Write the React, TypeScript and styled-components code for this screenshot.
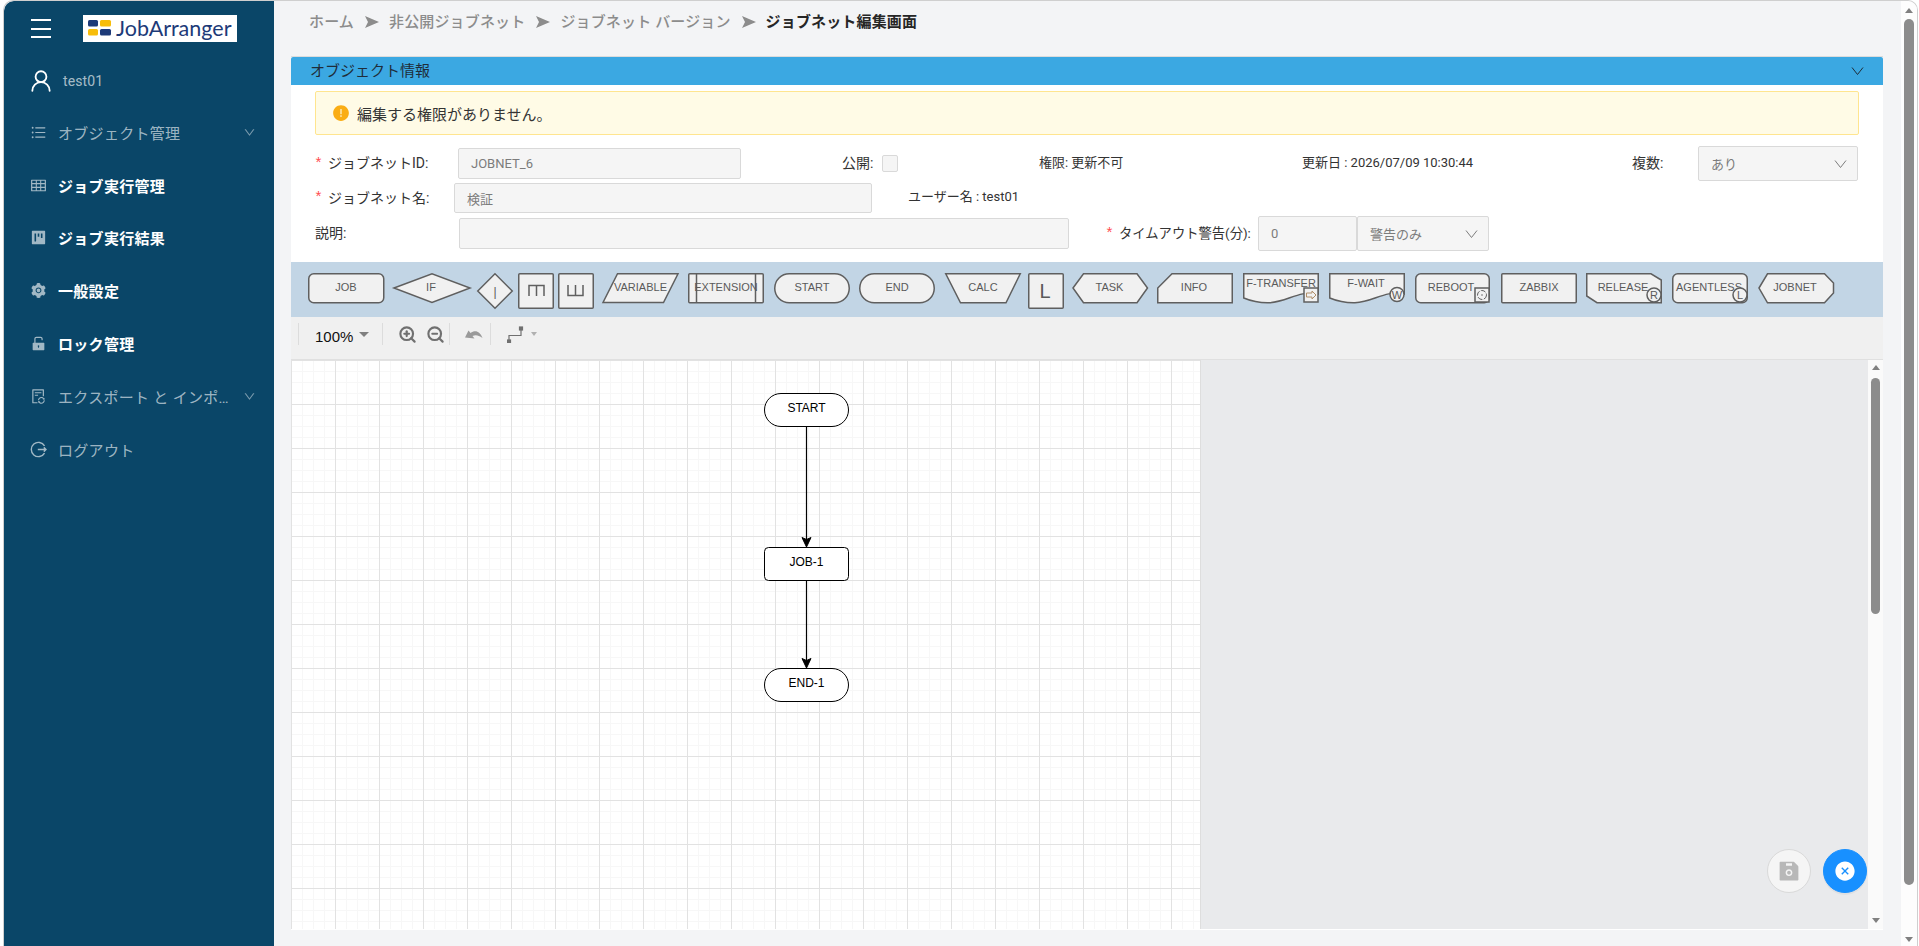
import React from 'react';
import styled, { createGlobalStyle } from 'styled-components';
import { AiOutlineUnorderedList, AiOutlineTable, AiFillProject, AiFillSetting, AiFillUnlock, AiOutlineFileSync, AiOutlineDown, AiFillExclamationCircle, AiFillSave, AiFillCloseCircle } from 'react-icons/ai';
import { UserRound, ZoomIn, ZoomOut } from 'lucide-react';

const FONT = `Roboto, "Noto Sans CJK JP", sans-serif`;

const Global = createGlobalStyle`
  html, body { margin: 0; padding: 0; height: 100%; overflow: hidden; background: #fff; }
  * { box-sizing: border-box; }
  #root { height: 100%; }
`;

const Frame = styled.div`
  margin-left: 3px; width: 1915px; height: 946px; display: flex; overflow: hidden;
  background: #f3f4f6; border: 1px solid #cfcfcf; border-bottom: 0;
  border-radius: 10px 10px 0 0; font-family: ${FONT}; color: #333;
`;

const Sidebar = styled.aside`
  width: 270px; flex: none; background: #0a4668; display: flex; flex-direction: column;
  border-top-left-radius: 10px;
`;
const TopRow = styled.div`
  height: 54px; display: flex; align-items: center; padding-left: 27px;
`;
const Burger = styled.div`
  width: 20px; height: 19px; display: flex; flex-direction: column; justify-content: space-between;
  margin-right: 32px; margin-top: 1px;
  span { display: block; height: 2px; background: #fff; }
`;
const Logo = styled.div`
  width: 154px; height: 27px; background: #fff; display: flex; align-items: center; padding-left: 5px; gap: 4px;
  span { font-family: Lato, sans-serif; font-weight: 400; font-size: 21.5px; color: #1d3a78; white-space: nowrap; }
`;
const UserRow = styled.div`
  height: 51px; display: flex; align-items: center; padding-left: 24px; gap: 9px;
  color: #fff; span { color: rgba(255,255,255,.65); font-size: 14px; letter-spacing: .1px; }
`;
const MenuItem = styled.div<{ $active?: boolean }>`
  height: 52.8px; display: flex; align-items: center; padding-left: 26px;
  color: ${p => (p.$active ? '#fff' : 'rgba(255,255,255,.62)')};
  svg.main { font-size: 17px; color: rgba(255,255,255,.62); flex: none; }
`;
const MenuText = styled.span<{ $active?: boolean }>`
  margin-left: 11px; font-size: 15px; letter-spacing: .3px; font-weight: ${p => (p.$active ? 600 : 400)};
  width: 171px; white-space: nowrap; overflow: hidden; text-overflow: ellipsis; flex: none;
`;
const MenuChevron = styled.span`
  margin-left: 14px; font-size: 13px; color: rgba(255,255,255,.45); display: flex;
`;

const Main = styled.main`
  width: 1627px; flex: none; padding: 0 18px 0 17px; display: flex; flex-direction: column;
`;
const Breadcrumb = styled.nav`
  height: 55px; display: flex; align-items: flex-start; padding: 11px 0 0 18px; font-size: 15px; line-height: 20px; font-weight: 500;
  color: #8c8c8c; white-space: nowrap; letter-spacing: .15px;
`;
const CrumbSep = styled.svg`
  width: 14px; height: 12px; margin: 4px 10px 0 11px; flex: none;
`;
const CrumbLast = styled.span`
  color: #262626; font-weight: 600;
`;
const Card = styled.section`
  background: #fff; border-top: 1px solid #dcdcdc; display: flex; flex-direction: column; height: 874px;
`;
const CardHead = styled.header`
  height: 28px; flex: none; background: #3ba8e2; display: flex; align-items: center; justify-content: space-between;
  padding: 0 19px 3px 19px; font-size: 15px; color: #1f2d3a; border-radius: 2px 2px 0 0;
`;
const Chevron = styled.svg<{ $nudge?: number }>`
  width: 13px; height: 8px; flex: none; margin-top: ${p => p.$nudge ?? 0}px;
  polyline { fill: none; stroke: currentColor; stroke-width: 1; }
`;
const Alert = styled.div`
  margin: 6px 24px 0 24px; height: 44px; flex: none; background: #fffbe6; border: 1px solid #ffe58f; border-radius: 2px;
  display: flex; align-items: center; padding-left: 16px; gap: 7px; font-size: 15px; color: #333;
  svg { color: #faad14; font-size: 18px; }
`;
const Form = styled.div`
  padding: 11px 0 11px 23px; display: flex; flex-direction: column; flex: none;
`;
const FormRow = styled.div<{ $h: number; $mt?: number }>`
  height: ${p => p.$h}px; margin-top: ${p => p.$mt ?? 0}px; display: flex; align-items: center; white-space: nowrap;
`;
const Label = styled.label<{ $w: number; $ml?: number; $size?: number }>`
  width: ${p => p.$w}px; margin-left: ${p => p.$ml ?? 0}px; flex: none; font-size: ${p => p.$size ?? 14}px; color: #333;
  display: flex; align-items: center; padding-bottom: 3px;
`;
const Req = styled.span`
  color: #ff4d4f; margin-right: 6px; font-size: 15px; width: 8px; padding-top: 5px; font-family: "Liberation Mono", monospace; line-height: 14px;
`;
const Info = styled.span<{ $w?: number; $ml?: number }>`
  ${p => (p.$w ? `width: ${p.$w}px;` : '')} margin-left: ${p => p.$ml ?? 0}px; flex: none; font-size: 13px; color: #333; margin-top: -5px;
`;
const Field = styled.div<{ $w: number; $h?: number }>`
  width: ${p => p.$w}px; height: ${p => p.$h ?? 31}px; flex: none; background: #f5f5f5; border: 1px solid #d9d9d9; border-radius: 2px;
  display: flex; align-items: center; justify-content: space-between; padding: 0 10px 0 12px; font-size: 13px; color: #7c7c7c;
`;
const Check = styled.span`
  width: 16px; height: 17px; flex: none; background: #f5f5f5; border: 1px solid #d9d9d9; border-radius: 2px;
`;
const ShapeBar = styled.div`
  height: 55px; flex: none; background: #c2d5e5; display: flex; align-items: flex-start; padding: 11px 0 0 17px;
`;
const ShapeSvg = styled.svg<{ $gap: number }>`
  flex: none; margin-right: ${p => p.$gap}px; overflow: visible; font-family: "Liberation Sans", Arial, sans-serif; font-size: 11px;
  .s { fill: #f1f1f1; stroke: #5f5f5f; stroke-width: 1.5; }
  .n { fill: none; stroke: #5f5f5f; stroke-width: 1.5; }
  text { fill: #5a5a5a; text-anchor: middle; }
`;
const ToolRow = styled.div`
  height: 43px; flex: none; background: #f0f0f0; border-bottom: 1px solid #e0e0e0; display: flex; align-items: flex-start; padding: 6px 0 0 7px;
`;
const ToolGroup = styled.div<{ $w: number; $pad: number; $gap?: number }>`
  width: ${p => p.$w}px; height: 22px; border-left: 1px solid #dcdcdc; padding-left: ${p => p.$pad}px; display: flex; align-items: center; gap: ${p => p.$gap ?? 0}px;
  flex: none; color: #707070;
`;
const ZoomText = styled.span`
  font-family: "Liberation Sans", Arial, sans-serif; font-size: 15px; color: #111; margin-right: 6px; margin-top: 4px;
`;
const Caret = styled.i<{ $small?: boolean }>`
  display: block; width: 0; height: 0; border-left: ${p => (p.$small ? 3.5 : 5)}px solid transparent; border-right: ${p => (p.$small ? 3.5 : 5)}px solid transparent;
  border-top: ${p => (p.$small ? 4 : 5)}px solid ${p => (p.$small ? '#b0b0b0' : '#808080')};
`;
const CanvasRow = styled.div`
  height: 569px; flex: none; display: flex; position: relative;
`;
const GridPane = styled.div`
  width: 909px; flex: none; background-color: #fff;
  background-image:
    linear-gradient(#e2e2e2 1px, transparent 1px), linear-gradient(90deg, #e2e2e2 1px, transparent 1px),
    linear-gradient(#f7f7f7 1px, transparent 1px), linear-gradient(90deg, #f7f7f7 1px, transparent 1px);
  background-size: 44px 44px, 44px 44px, 11px 11px, 11px 11px;
  svg { display: block; width: 100%; height: 100%; font-family: "Liberation Sans", Arial, sans-serif; font-size: 12px; }
  text { text-anchor: middle; fill: #000; }
`;
const SidePane = styled.div`
  flex: 1; background: #e9eaec; border-left: 1px solid #dedede;
`;
const Track = styled.div<{ $w: number; $bg: string }>`
  width: ${p => p.$w}px; flex: none; background: ${p => p.$bg}; display: flex; flex-direction: column; align-items: center;
`;
const ArrowUp = styled.i<{ $mt: number }>`
  display: block; width: 0; height: 0; margin-top: ${p => p.$mt}px; border: 4px solid transparent; border-top: 0; border-bottom: 5px solid #808080; flex: none;
`;
const ArrowDown = styled.i<{ $mb: number }>`
  display: block; width: 0; height: 0; margin-top: auto; margin-bottom: ${p => p.$mb}px; border: 4px solid transparent; border-bottom: 0; border-top: 5px solid #808080; flex: none;
`;
const Thumb = styled.div<{ $w: number; $mt: number; $h: number }>`
  width: ${p => p.$w}px; height: ${p => p.$h}px; margin-top: ${p => p.$mt}px; background: #8c8c8c; border-radius: 5px; flex: none;
`;
const Fab = styled.button<{ $primary?: boolean }>`
  position: absolute; top: 489px; left: ${p => (p.$primary ? 1532 : 1476)}px; width: 44px; height: 44px; border-radius: 50%; padding: 0;
  display: flex; align-items: center; justify-content: center; cursor: pointer;
  background: ${p => (p.$primary ? '#1890ff' : '#f5f5f5')}; border: 1px solid ${p => (p.$primary ? '#1890ff' : '#d9d9d9')};
  color: ${p => (p.$primary ? '#fff' : '#b8b8b8')}; font-size: ${p => (p.$primary ? 22 : 24)}px;
  ${p => (p.$primary ? 'box-shadow: 0 2px 0 rgba(0,0,0,.04);' : '')}
`;

const Arrow = () => (
  <CrumbSep viewBox="0 0 14 12"><path d="M0 0 L14 6 L0 12 L3 6 Z" fill="#8c8c8c" /></CrumbSep>
);

const Vee = ({ nudge }: { nudge?: number }) => (
  <Chevron viewBox="0 0 13 8" $nudge={nudge}><polyline points="1,.5 6.5,7.5 12,.5" /></Chevron>
);

const LogoutIcon = () => (
  <svg className="main" width="17" height="17" viewBox="0 0 24 24" fill="none" stroke="currentColor" strokeWidth="2">
    <path d="M20.5 7 A10 10 0 1 0 20.5 17" />
    <path d="M11 12 H22.5 M19.5 9 L22.5 12 L19.5 15" />
  </svg>
);

const T = ({ x, y = 29, children, size }: { x: number; y?: number; children: React.ReactNode; size?: number }) => (
  <text x={x} y={y} fontSize={size}>{children}</text>
);

const Shape = ({ w, h = 31, gap, children }: { w: number; h?: number; gap: number; children: React.ReactNode }) => (
  <ShapeSvg width={w} height={h} viewBox={`0 0 ${w} ${h}`} $gap={gap}>{children}</ShapeSvg>
);

const Shapes = () => (
  <ShapeBar>
    <Shape w={76} gap={9}><rect className="s" x=".75" y=".75" width="75" height="29" rx="5" /><T x={38} y={18}>JOB</T></Shape>
    <Shape w={78} gap={6}><path className="s" d="M1 15 L39 .75 L77 15 L39 29.5 Z" /><T x={38} y={18}>IF</T></Shape>
    <Shape w={36} h={36} gap={5}><path className="s" d="M.75 18 L18 .75 L35.25 18 L18 35.25 Z" /><T x={18} y={23} size={12}>|</T></Shape>
    <Shape w={36} h={36} gap={4}><rect className="s" x=".75" y=".75" width="34.5" height="34.5" rx="1" /><path className="n" d="M11 23 V12.5 H26 V23 M18.5 12.5 V23" /></Shape>
    <Shape w={36} h={36} gap={8}><rect className="s" x=".75" y=".75" width="34.5" height="34.5" rx="1" /><path className="n" d="M10 12 V22.5 H25 V12 M17.5 22.5 V12" /></Shape>
    <Shape w={77} gap={9}><path className="s" d="M1 29.5 L15.5 .75 L76 .75 L61.5 29.5 Z" /><T x={38.5} y={18}>VARIABLE</T></Shape>
    <Shape w={76} gap={10}><rect className="s" x=".75" y=".75" width="74.5" height="29" rx="1" /><path className="n" d="M8.5 .75 V29.75 M67.5 .75 V29.75" /><T x={38} y={18}>EXTENSION</T></Shape>
    <Shape w={76} gap={9}><rect className="s" x=".75" y=".75" width="74.5" height="29" rx="14.5" /><T x={38} y={18}>START</T></Shape>
    <Shape w={76} gap={10}><rect className="s" x=".75" y=".75" width="74.5" height="29" rx="14.5" /><T x={38} y={18}>END</T></Shape>
    <Shape w={76} gap={7}><path className="s" d="M.75 .75 H75.25 L61 29.75 H15.5 Z" /><T x={38} y={18}>CALC</T></Shape>
    <Shape w={36} h={36} gap={8}><rect className="s" x=".75" y=".75" width="34.5" height="34.5" rx="1" /><T x={17} y={25} size={20}>L</T></Shape>
    <Shape w={76} gap={9}><path className="s" d="M1 15 L11.5 .75 H65 L75.5 15 L65 29.75 H11.5 Z" /><T x={37.5} y={18}>TASK</T></Shape>
    <Shape w={76} gap={10}><path className="s" d="M15 .75 H75.25 V29.75 H.75 V15 Z" /><T x={37} y={18}>INFO</T></Shape>
    <Shape w={76} gap={10}>
      <path className="s" d="M.75 .75 H75.25 V21 C55 17 45 29 26 29.75 C16 30 8 28 .75 25 Z" />
      <T x={38} y={14}>F-TRANSFER</T>
      <rect className="s" x="61" y="15" width="14" height="14" />
      <path className="n" style={{ stroke: '#b08f6a', strokeWidth: 1 }} d="M63.5 20 H69 V18 L73 22 L69 26 V24 H63.5 Z" />
    </Shape>
    <Shape w={76} gap={10}>
      <path className="s" d="M.75 .75 H75.25 V21 C55 17 45 29 26 29.75 C16 30 8 28 .75 25 Z" />
      <T x={37} y={14}>F-WAIT</T>
      <circle className="s" cx="68" cy="21.5" r="7" />
      <T x={68} y={25.5}>W</T>
    </Shape>
    <Shape w={75} gap={11}>
      <rect className="s" x=".75" y=".75" width="73.5" height="29" rx="5" />
      <T x={36} y={18}>REBOOT</T>
      <rect className="s" x="60" y="15" width="14" height="14" />
      <circle className="n" cx="67" cy="22" r="4.5" style={{ strokeWidth: 1, strokeDasharray: '5 1.5' }} />
      <circle cx="67" cy="22" r=".8" fill="#666" />
    </Shape>
    <Shape w={76} gap={9}><rect className="s" x=".75" y=".75" width="74.5" height="29" rx="1" /><T x={38} y={18}>ZABBIX</T></Shape>
    <Shape w={76} gap={10}>
      <path className="s" d="M.75 .75 H65 L75.25 7 V29.75 H11 L.75 23 Z" />
      <T x={37} y={18}>RELEASE</T>
      <circle className="s" cx="68" cy="22" r="7" />
      <T x={68} y={26}>R</T>
    </Shape>
    <Shape w={76} gap={10}>
      <rect className="s" x=".75" y=".75" width="74.5" height="29" rx="5" />
      <T x={37} y={18}>AGENTLESS</T>
      <circle className="s" cx="68" cy="22" r="7" />
      <T x={68} y={26}>L</T>
    </Shape>
    <Shape w={76} gap={0}><path className="s" d="M1 15 L9.5 .75 H66.5 L75.5 10 V20 L66.5 29.75 H9.5 Z" /><T x={37} y={18}>JOBNET</T></Shape>
  </ShapeBar>
);

const Diagram = () => (
  <svg viewBox="0 0 909 569">
    <path d="M515.5 66 V180" stroke="#000" strokeWidth="1.2" fill="none" />
    <path d="M515.5 187 L511 177.5 L515.5 179.5 L520 177.5 Z" fill="#000" stroke="#000" />
    <path d="M515.5 221 V301" stroke="#000" strokeWidth="1.2" fill="none" />
    <path d="M515.5 308 L511 298.5 L515.5 300.5 L520 298.5 Z" fill="#000" stroke="#000" />
    <rect x="473.5" y="33.5" width="84" height="33" rx="16.5" fill="#fff" stroke="#000" />
    <text x="515.5" y="52">START</text>
    <rect x="473.5" y="187.5" width="84" height="33" rx="4" fill="#fff" stroke="#000" />
    <text x="515.5" y="206">JOB-1</text>
    <rect x="473.5" y="308.5" width="84" height="33" rx="16.5" fill="#fff" stroke="#000" />
    <text x="515.5" y="327">END-1</text>
  </svg>
);

const menu = [
  { t: 'オブジェクト管理', i: <AiOutlineUnorderedList className="main" />, chev: true },
  { t: 'ジョブ実行管理', i: <AiOutlineTable className="main" />, on: true },
  { t: 'ジョブ実行結果', i: <AiFillProject className="main" />, on: true },
  { t: '一般設定', i: <AiFillSetting className="main" />, on: true },
  { t: 'ロック管理', i: <AiFillUnlock className="main" />, on: true },
  { t: 'エクスポート と インポート', i: <AiOutlineFileSync className="main" />, chev: true },
  { t: 'ログアウト', i: <LogoutIcon /> },
];

export default function App() {
  return (
    <>
      <Global />
      <Frame>
        <Sidebar>
          <TopRow>
            <Burger><span /><span /><span /></Burger>
            <Logo>
              <svg width="24" height="16" viewBox="0 0 24 16">
                <rect x="0" y="0" width="10" height="6.5" rx="1.5" fill="#1d3a78" />
                <rect x="12" y="0" width="11" height="6.5" rx="1.5" fill="#f7bd0a" />
                <rect x="0" y="9" width="10" height="6.5" rx="1.5" fill="#f7bd0a" />
                <rect x="12" y="9" width="11" height="6.5" rx="1.5" fill="#1d3a78" />
              </svg>
              <span>JobArranger</span>
            </Logo>
          </TopRow>
          <UserRow><UserRound size={26} strokeWidth={1.7} /><span>test01</span></UserRow>
          {menu.map(m => (
            <MenuItem key={m.t} $active={m.on}>
              {m.i}
              <MenuText $active={m.on}>{m.t}</MenuText>
              {m.chev && <MenuChevron><AiOutlineDown /></MenuChevron>}
            </MenuItem>
          ))}
        </Sidebar>
        <Main>
          <Breadcrumb>
            <span>ホーム</span><Arrow /><span>非公開ジョブネット</span><Arrow /><span>ジョブネット バージョン</span><Arrow /><CrumbLast>ジョブネット編集画面</CrumbLast>
          </Breadcrumb>
          <Card>
            <CardHead><span>オブジェクト情報</span><Vee nudge={3} /></CardHead>
            <Alert><AiFillExclamationCircle /><span>編集する権限がありません。</span></Alert>
            <Form>
              <FormRow $h={35}>
                <Label $w={144}><Req>*</Req>ジョブネットID:</Label>
                <Field $w={283}>JOBNET_6</Field>
                <Label $w={40} $ml={101}>公開:</Label>
                <Check />
                <Info $w={263} $ml={141}>権限: 更新不可</Info>
                <Info $w={330}>更新日 : 2026/07/09 10:30:44</Info>
                <Label $w={66}>複数:</Label>
                <Field $w={160} $h={35}>あり<Vee /></Field>
              </FormRow>
              <FormRow $h={30} $mt={2}>
                <Label $w={140}><Req>*</Req>ジョブネット名:</Label>
                <Field $w={418} $h={30}>検証</Field>
                <Info $ml={36}>ユーザー名 : test01</Info>
              </FormRow>
              <FormRow $h={35} $mt={3}>
                <Label $w={144} $ml={1}>説明:</Label>
                <Field $w={610} />
                <Label $w={153} $ml={36} $size={13.3}><Req>*</Req>タイムアウト警告(分):</Label>
                <Field $w={99} $h={35}>0</Field>
                <Field $w={132} $h={35}>警告のみ<Vee /></Field>
              </FormRow>
            </Form>
            <Shapes />
            <ToolRow>
              <ToolGroup $w={84} $pad={16}>
                <ZoomText>100%</ZoomText><Caret />
              </ToolGroup>
              <ToolGroup $w={67} $pad={15} $gap={9}>
                <ZoomIn size={19} strokeWidth={2.7} /><ZoomOut size={19} strokeWidth={2.7} />
              </ToolGroup>
              <ToolGroup $w={41} $pad={15}>
                <svg width="18" height="11" viewBox="0 0 18 11"><path d="M0 8.5 L3.5 1.5 L5.5 4 C10 .5 15 2 17.5 9 C13.5 6 10.5 5.5 7.5 7 L9.5 9.5 Z" fill="#9a9a9a" /></svg>
              </ToolGroup>
              <ToolGroup $w={50} $pad={16} $gap={7}>
                <svg width="17" height="17" viewBox="0 0 17 17" fill="none" stroke="#707070" strokeWidth="1.2">
                  <path d="M2 15 V9.5 H14 V3" /><rect x="12.5" y="1" width="3" height="3" fill="#707070" /><rect x=".5" y="14" width="3" height="2.5" fill="#707070" />
                </svg>
                <Caret $small />
              </ToolGroup>
            </ToolRow>
            <CanvasRow>
              <GridPane><Diagram /></GridPane>
              <SidePane />
              <Track $w={15} $bg="#fafafa">
                <ArrowUp $mt={5} />
                <Thumb $w={9} $mt={8} $h={236} />
                <ArrowDown $mb={6} />
              </Track>
              <Fab aria-label="save"><AiFillSave /></Fab>
              <Fab $primary aria-label="close"><AiFillCloseCircle /></Fab>
            </CanvasRow>
          </Card>
        </Main>
        <Track $w={16} $bg="#fdfdfd">
          <ArrowUp $mt={7} />
          <Thumb $w={10} $mt={6} $h={866} />
          <ArrowDown $mb={4} />
        </Track>
      </Frame>
    </>
  );
}
